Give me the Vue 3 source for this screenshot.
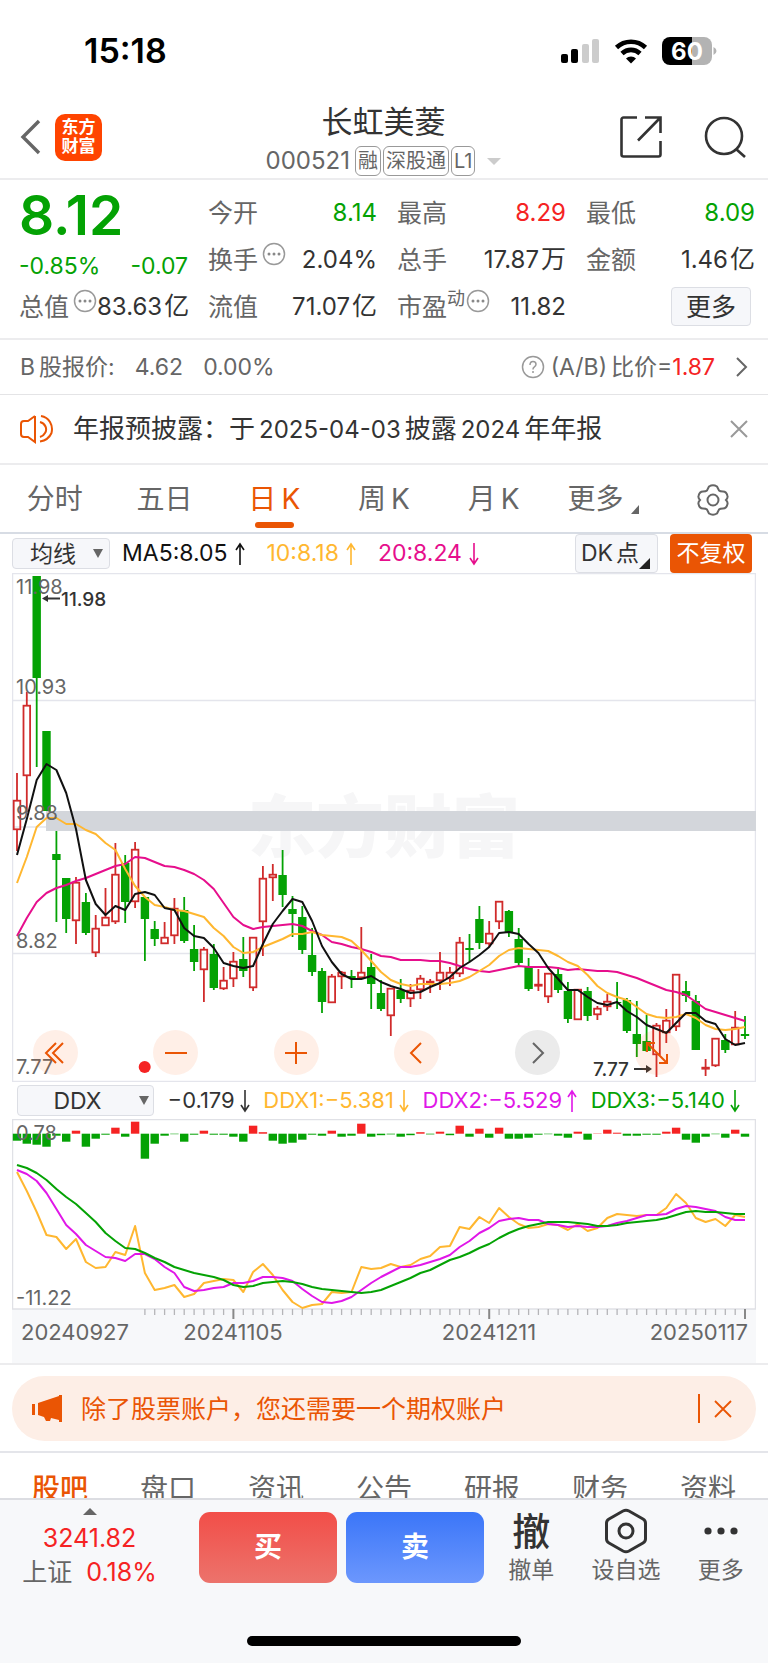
<template>
  <div class="page">
    <div class="status-bar">
      <span class="clock">15:18</span>
      <svg class="status-icons" width="160" height="30" viewBox="0 0 160 30">
        <rect x="1" y="18" width="7" height="9" rx="2" />
        <rect x="11" y="13" width="7" height="14" rx="2" />
        <rect x="22" y="8" width="7" height="19" rx="2" fill="#ccc" />
        <rect x="32" y="3" width="7" height="24" rx="2" fill="#ccc" />
        <g fill="none" stroke="#000" stroke-width="4.6">
          <path d="M56.500 11.500a21 21 0 0 1 29 0" />
          <path d="M62 17.500a13 13 0 0 1 18 0" />
        </g>
        <path d="M66 22.500a7 7 0 0 1 10 0l-5 5z" />
        <path d="M110 1h22v28h-22a8 8 0 0 1-8-8V9a8 8 0 0 1 8-8z" />
        <path d="M132 1h12a8 8 0 0 1 8 8v12a8 8 0 0 1-8 8h-12z" fill="#b3b3b3" />
        <path d="M153.500 11q3 1.500 3 4t-3 4z" fill="#b3b3b3" />
        <text x="127" y="24" class="battery-text" text-anchor="middle">60</text>
      </svg>
    </div>

    <header class="header">
      <div class="header-left">
        <button class="icon-btn" aria-label="返回">
          <svg width="22" height="36" viewBox="0 0 22 36"><path d="M19 2 3 18l16 16" fill="none" stroke="#666" stroke-width="3.400" /></svg>
        </button>
        <div class="logo"><span>东方</span><span>财富</span></div>
      </div>
      <div class="header-title">
        <h1>长虹美菱</h1>
        <div class="header-sub">
          <span class="code">000521</span>
          <span v-for="tag in tags" :key="tag" class="tag">{{ tag }}</span>
          <i class="caret" />
        </div>
      </div>
      <div class="header-right">
        <button class="icon-btn" aria-label="分享">
          <svg width="44" height="44" viewBox="0 0 44 44" fill="none" stroke="#333" stroke-width="2.600">
            <path d="M18 2.500H4.500a2 2 0 0 0-2 2v35a2 2 0 0 0 2 2h35a2 2 0 0 0 2-2V26M26 2.500h15.500V18M41 3 19 25.500" />
          </svg>
        </button>
        <button class="icon-btn" aria-label="搜索">
          <svg width="44" height="44" viewBox="0 0 44 44" fill="none" stroke="#333" stroke-width="2.600">
            <circle cx="21" cy="21" r="18" /><path d="m33 34 9 8" />
          </svg>
        </button>
      </div>
    </header>

    <section class="quote">
      <div class="price">8.12</div>
      <div class="cell"><span>今开</span><b class="green">8.14</b></div>
      <div class="cell"><span>最高</span><b class="red">8.29</b></div>
      <div class="cell"><span>最低</span><b class="green">8.09</b></div>
      <div class="cell change green"><span>-0.85%</span><span>-0.07</span></div>
      <div class="cell"><span>换手<svg class="dots" width="24" height="24" viewBox="0 0 24 24"><use href="#more-dots" /></svg></span><b>2.04%</b></div>
      <div class="cell"><span>总手</span><b>17.87<em>万</em></b></div>
      <div class="cell"><span>金额</span><b>1.46<em>亿</em></b></div>
      <div class="cell"><span>总值<svg class="dots" width="24" height="24" viewBox="0 0 24 24"><use href="#more-dots" /></svg></span><b>83.63<em>亿</em></b></div>
      <div class="cell"><span>流值</span><b>71.07<em>亿</em></b></div>
      <div class="cell"><span>市盈<sup>动</sup><svg class="dots tight" width="24" height="24" viewBox="0 0 24 24"><use href="#more-dots" /></svg></span><b>11.82</b></div>
      <div class="cell more-cell"><button class="soft-btn more-btn">更多</button></div>
      <svg width="0" height="0" class="defs">
        <symbol id="more-dots" viewBox="0 0 24 24">
          <circle cx="12" cy="12" r="10.500" fill="none" stroke="#999" stroke-width="1.500" />
          <g fill="#888"><circle cx="7" cy="12" r="1.500" /><circle cx="12" cy="12" r="1.500" /><circle cx="17" cy="12" r="1.500" /></g>
        </symbol>
      </svg>
    </section>

    <section class="b-share">
      <span>B<em>股报价:</em></span><span>4.62</span><span>0.00%</span>
      <a href="#" class="ratio">
        <svg width="24" height="24" viewBox="0 0 24 24" fill="none" stroke="#999" stroke-width="1.500">
          <circle cx="12" cy="12" r="10.500" />
          <path d="M9 10q0-3.500 3-3.500t3 2.800q0 1.500-1.600 2.600T12 14.500" /><path d="M12 16v2" />
        </svg>
        <span>(A/B)<em>比价</em>=<b class="red">1.87</b></span>
        <svg class="ratio-arrow" width="12" height="20" viewBox="0 0 12 20"><path d="m1 1 9 9-9 9" fill="none" stroke="#666" stroke-width="2" /></svg>
      </a>
    </section>

    <section class="notice">
      <svg width="34" height="30" viewBox="0 0 34 30" fill="none" stroke="#ea5504" stroke-width="2">
        <path d="M15 2v26l-7-5H4q-3 0-3-3V10q0-3 3-3h4l7-5M20 8q4 1 5.500 4.500T25 19q-1.500 3-5 4M21 2q6 1 9 6t1.500 11q-3 7-11.500 8.500" />
      </svg>
      <p>年报预披露：于<i>2025-04-03</i>披露<i>2024</i>年年报</p>
      <button class="icon-btn" aria-label="关闭">
        <svg width="18" height="18" viewBox="0 0 18 18"><path d="m1 1 16 16M17 1 1 17" stroke="#999" stroke-width="2" /></svg>
      </button>
    </section>

    <nav class="period-tabs">
      <button
        v-for="p in periods"
        :key="p"
        :class="{ active: p === activePeriod }"
        @click="activePeriod = p"
      >{{ p }}<i v-if="p === '更多'" class="corner" /></button>
      <button aria-label="设置">
        <svg width="34" height="34" viewBox="0 0 34 34" fill="none" stroke="#666" stroke-width="2">
          <path d="M13 3.500q4-2.500 8 0l2 4q1 1 4 1 3.500 0 4.500 4.500.500 2-1.500 4 2 2 1.500 4-1 4.500-4.500 4.500-3 0-4 1l-2 4q-4 2.500-8 0l-2-4q-1-1-4-1Q3.500 25.500 2.500 21q-.5-2 1.500-4-2-2-1.500-4 1-4.500 4.500-4.500 3 0 4-1z" />
          <circle cx="17" cy="17" r="5.500" />
        </svg>
      </button>
    </nav>

    <div class="ma-bar">
      <label class="picker ma-picker">
        <select v-model="overlay" aria-label="主图指标"><option>均线</option><option>布林</option></select>
      </label>
      <span class="reading ma">MA5:8.05<svg class="arrow" viewBox="0 0 10 24"><path :d="UP" /></svg></span>
      <span class="reading ma orange">10:8.18<svg class="arrow" viewBox="0 0 10 24"><path :d="UP" /></svg></span>
      <span class="reading ma pink">20:8.24<svg class="arrow" viewBox="0 0 10 24"><path :d="DOWN" /></svg></span>
      <button class="soft-btn dk-btn">DK<em>点</em><i class="corner" /></button>
      <button class="adjust-btn">不复权</button>
    </div>

    <div class="chart">
      <svg viewBox="12 573 744 509">
        <text x="384" y="852" class="watermark" text-anchor="middle">东方财富</text>
        <g stroke="#e4e5ec" stroke-width="1.500" fill="none">
          <rect x="12.500" y="573.500" width="743" height="508" />
          <path d="M12 700.500h744M12 827h744M12 953.500h744" />
        </g>
        <rect x="46" y="811" width="710" height="20" fill="#d3d6db" />
        <g v-for="(c, i) in candles" :key="i">
          <template v-if="c[0]">
            <path :d="`M${x(i)} ${c[1]}V${c[2]}M${x(i)} ${c[3]}V${c[4]}`" stroke="#d02b2b" stroke-width="1.800" />
            <rect :x="x(i) - 3.3" :y="c[2] + 0.7" width="6.600" :height="Math.max(c[3] - c[2] - 1.4, 1)" fill="none" stroke="#d02b2b" stroke-width="1.800" />
          </template>
          <template v-else>
            <path :d="`M${x(i)} ${c[1]}V${c[4]}`" stroke="#04a204" stroke-width="1.800" />
            <rect :x="x(i) - 4.2" :y="c[2]" width="8.400" :height="c[3] - c[2]" fill="#04a204" />
          </template>
        </g>
        <g class="lines">
          <polyline :points="line(ma20)" stroke="#e60e8c" />
          <polyline :points="line(ma10)" stroke="#ffb730" />
          <polyline :points="line(ma5)" stroke="#111" />
        </g>
        <g class="axis">
          <text x="16" y="594">11.98</text>
          <text x="16" y="694">10.93</text>
          <text x="16" y="820">9.88</text>
          <text x="16" y="948">8.82</text>
          <text x="16" y="1074">7.77</text>
        </g>
        <circle cx="144.700" cy="1067" r="6" fill="#f52323" />
        <g class="marker">
          <text x="61" y="606">11.98</text>
          <path d="M60 598.500H46" /><path d="m42 598.500 6-3.500v7z" class="head" />
          <text x="593" y="1076">7.77</text>
          <path d="M634 1069h13" /><path d="m652 1069-6-4v8z" class="head" />
        </g>
      </svg>
      <div class="chart-tools">
        <button v-for="t in tools" :key="t.name" class="round-btn" :class="{ gray: t.gray }" :aria-label="t.name">
          <svg width="26" height="26" viewBox="0 0 26 26"><path :d="t.icon" /></svg>
        </button>
      </div>
    </div>

    <div class="ddx-bar">
      <label class="picker ddx-picker">
        <select v-model="indicator" aria-label="副图指标"><option>DDX</option><option>MACD</option></select>
      </label>
      <span class="reading">−0.179<svg class="arrow" viewBox="0 0 10 24"><path :d="DOWN" /></svg></span>
      <span class="reading orange">DDX1:−5.381<svg class="arrow" viewBox="0 0 10 24"><path :d="DOWN" /></svg></span>
      <span class="reading magenta">DDX2:−5.529<svg class="arrow" viewBox="0 0 10 24"><path :d="UP" /></svg></span>
      <span class="reading green">DDX3:−5.140<svg class="arrow" viewBox="0 0 10 24"><path :d="DOWN" /></svg></span>
    </div>

    <div class="chart">
      <svg viewBox="12 1119 744 244">
        <rect x="12" y="1309" width="744" height="54" fill="#f7f8fa" />
        <rect x="12.500" y="1119.500" width="743" height="189.500" fill="none" stroke="#e0e1e6" stroke-width="1.500" />
        <rect
          v-for="(v, i) in ddx"
          :key="i"
          :x="x(i) - 4.2"
          :y="v > 0 ? 1133.7 - v : 1133.7"
          width="8.400"
          :height="Math.abs(v)"
          :fill="v > 0 ? '#f52323' : '#04a204'"
        />
        <g class="axis"><text x="16" y="1140">0.78</text><text x="16" y="1305">-11.22</text></g>
        <g class="lines">
          <polyline :points="line(ddx1)" stroke="#ffb730" />
          <polyline :points="line(ddx2)" stroke="#e017e8" />
          <polyline :points="line(ddx3)" stroke="#04a204" />
        </g>
        <path
          v-for="i in ticks"
          :key="i"
          :d="`M${x(i)} 1309v${isMajor(i) ? 10 : 6}`"
          :stroke="isMajor(i) ? '#888' : '#b5b5b8'"
          :stroke-width="isMajor(i) ? 2 : 1.3"
        />
        <g class="dates">
          <text x="21" y="1340">20240927</text>
          <text x="233" y="1340" text-anchor="middle">20241105</text>
          <text x="489" y="1340" text-anchor="middle">20241211</text>
          <text x="748" y="1340" text-anchor="end">20250117</text>
        </g>
      </svg>
    </div>

    <div class="banner-wrap">
      <div class="banner">
        <svg width="32" height="28" viewBox="0 0 32 28" fill="#ea5504">
          <path d="M0 9h3v11H0zM6 8 27 1V0h3v27h-3v-2l-8-2-1 3h-4l-2-4-6-2z" />
        </svg>
        <p>除了股票账户，您还需要一个期权账户</p>
        <span class="banner-divider" />
        <button class="icon-btn" aria-label="关闭">
          <svg width="18" height="18" viewBox="0 0 18 18"><path d="m1 1 16 16M17 1 1 17" stroke="#ea5504" stroke-width="1.800" /></svg>
        </button>
      </div>
    </div>

    <nav class="info-tabs">
      <button v-for="t in infoTabs" :key="t" :class="{ active: t === activeInfo }" @click="activeInfo = t">{{ t }}</button>
    </nav>

    <footer class="bottom">
      <div class="bottom-bar">
        <div class="index">
          <i class="up-caret" />
          <span class="red">3241.82</span>
          <span class="index-row">上证<b class="red">0.18%</b></span>
        </div>
        <div class="trade">
          <button class="buy">买</button>
          <button class="sell">卖</button>
        </div>
        <div class="actions">
          <button><span class="action-icon">撤</span>撤单</button>
          <button>
            <span class="action-icon">
              <svg width="44" height="46" viewBox="0 0 44 46" fill="none" stroke="#333" stroke-width="3">
                <path d="M19 3q3-1.500 6 0l14 8q2.500 1.500 2.500 4v16q0 2.500-2.500 4l-14 8q-3 1.500-6 0L5 35q-2.500-1.500-2.500-4V15q0-2.500 2.500-4z" />
                <circle cx="22" cy="23" r="7" />
              </svg>
            </span>设自选
          </button>
          <button>
            <span class="action-icon">
              <svg width="34" height="8" viewBox="0 0 34 8" fill="#333"><circle cx="4" cy="4" r="3.600" /><circle cx="17" cy="4" r="3.600" /><circle cx="30" cy="4" r="3.600" /></svg>
            </span>更多
          </button>
        </div>
      </div>
      <div class="home-indicator" />
    </footer>
  </div>
</template>

<script setup>
import { ref } from 'vue'

const tags = ['融', '深股通', 'L1']
const periods = ['分时', '五日', '日\u2009K', '周\u2009K', '月\u2009K', '更多']
const activePeriod = ref(periods[2])
const overlay = ref('均线')
const indicator = ref('DDX')
const infoTabs = ['股吧', '盘口', '资讯', '公告', '研报', '财务', '资料']
const activeInfo = ref('股吧')

const UP = 'M5 23V2M1 8l4-6 4 6'
const DOWN = 'M5 1v21M1 16l4 6 4-6'

const tools = [
  { name: '最左', icon: 'M13 3 3 13l10 10M20 3 10 13l10 10' },
  { name: '缩小', icon: 'M2 13h22' },
  { name: '放大', icon: 'M2 13h22M13 2v22' },
  { name: '左移', icon: 'M17 3 7 13l10 10' },
  { name: '右移', icon: 'M9 3l10 10L9 23', gray: true },
  { name: '全屏', icon: 'M11 3H3v9M3 3l20 20M15 23h8v-9' }
]

const STEP = 728 / 74
const x = i => +(17 + i * STEP).toFixed(1)
const line = ys => ys.map((y, i) => `${x(i)},${y}`).join(' ')

// [rising, high, body top, body bottom, low]
const candles = [
  [1, 773, 800, 830, 851], [1, 692, 705, 776, 812], [0, 576, 576, 678, 767], [0, 731, 731, 811, 811], [0, 831, 854, 860, 922],
  [0, 878, 878, 919, 933], [1, 877, 882, 921, 944], [0, 893, 902, 933, 935], [1, 915, 928, 953, 957], [1, 888, 917, 926, 926],
  [1, 843, 874, 922, 924], [0, 855, 863, 902, 923], [1, 842, 849, 902, 908], [0, 897, 897, 919, 961], [0, 921, 929, 939, 946],
  [1, 922, 937, 944, 944], [1, 898, 908, 936, 944], [0, 897, 910, 941, 943], [0, 925, 949, 962, 971], [1, 947, 949, 970, 1002],
  [0, 944, 954, 988, 990], [1, 967, 980, 989, 990], [1, 952, 961, 979, 987], [0, 937, 959, 971, 977], [1, 937, 937, 988, 991],
  [1, 866, 878, 922, 956], [1, 864, 874, 878, 901], [0, 850, 875, 895, 907], [0, 896, 909, 914, 937], [0, 906, 917, 950, 954],
  [0, 928, 955, 972, 976], [0, 968, 971, 1002, 1013], [1, 974, 976, 1003, 1003], [1, 971, 972, 977, 989], [0, 970, 976, 978, 988],
  [1, 927, 972, 978, 979], [0, 954, 967, 984, 1009], [0, 980, 993, 1009, 1011], [1, 988, 988, 1016, 1036], [0, 979, 990, 999, 1003],
  [1, 984, 990, 999, 1007], [1, 975, 978, 990, 999], [1, 979, 981, 983, 993], [1, 952, 972, 981, 990], [1, 967, 972, 979, 986],
  [1, 937, 942, 974, 977], [0, 934, 948, 950, 962], [0, 906, 919, 943, 949], [1, 921, 933, 944, 947], [1, 901, 901, 922, 929],
  [0, 910, 911, 933, 937], [0, 928, 939, 963, 967], [0, 958, 967, 989, 991], [1, 969, 984, 985, 991], [1, 973, 973, 997, 1003],
  [0, 967, 974, 990, 993], [0, 982, 991, 1019, 1023], [1, 989, 989, 1020, 1020], [0, 987, 991, 1016, 1021], [1, 1006, 1008, 1015, 1020],
  [1, 994, 1001, 1007, 1011], [0, 982, 1002, 1003, 1009], [0, 998, 1000, 1031, 1033], [0, 1001, 1034, 1044, 1057], [0, 1015, 1041, 1051, 1052],
  [1, 1023, 1025, 1055, 1077], [1, 1009, 1020, 1033, 1043], [1, 974, 974, 1027, 1031], [0, 981, 991, 996, 1002], [0, 995, 1001, 1050, 1050],
  [1, 1059, 1067, 1069, 1076], [1, 1038, 1038, 1066, 1067], [0, 1034, 1040, 1050, 1053], [1, 1011, 1027, 1045, 1045], [0, 1016, 1034, 1036, 1039]
]

const ma5 = [
  855, 819, 780, 764, 770, 793, 829, 880, 904, 915, 906, 910, 894, 892, 895, 908, 910, 928, 936, 938, 948, 963, 966, 968, 966,
  944, 924, 911, 899, 902, 921, 946, 962, 974, 979, 979, 976, 982, 986, 989, 993, 992, 987, 983, 977, 968, 962, 955, 947, 933,
  932, 934, 944, 953, 968, 979, 990, 990, 997, 1003, 1005, 1002, 1011, 1017, 1025, 1029, 1033, 1023, 1013, 1013, 1021, 1024, 1039, 1045, 1043
]
const ma10 = [
  883, 857, 827, 818, 818, 824, 824, 830, 834, 843, 850, 869, 886, 897, 905, 907, 910, 911, 914, 917, 928, 936, 947, 953, 952,
  947, 943, 939, 934, 934, 932, 935, 936, 937, 941, 950, 961, 972, 980, 984, 986, 984, 984, 984, 983, 981, 977, 971, 965, 956,
  950, 948, 949, 950, 951, 956, 962, 966, 975, 986, 993, 997, 1000, 1007, 1014, 1017, 1018, 1017, 1014, 1018, 1025, 1029, 1030, 1029, 1027
]
const ma20 = [
  936, 918, 902, 893, 888, 885, 881, 878, 874, 870, 866, 864, 857, 858, 862, 866, 867, 870, 874, 880, 889, 903, 917, 925, 929,
  927, 926, 925, 924, 926, 931, 935, 942, 944, 947, 949, 952, 956, 957, 960, 960, 960, 961, 961, 963, 966, 969, 971, 972, 970,
  968, 966, 967, 967, 967, 968, 970, 969, 970, 971, 971, 972, 975, 978, 982, 986, 990, 992, 995, 1002, 1009, 1012, 1015, 1018, 1021
]

const ddx = [
  -7, -10, -11, -13, -2, -8, 3, -13, -5, -1, 6, -3, 12, -25, -10, -2, -0.5, -8, -1, 3, -1, -1, -3, -8, 8,
  1.5, -7, -10, -9, -6, -1, -2, 3, -3, -2, 10, -3, -1.5, -0.7, -3, -1.5, 1.5, -0.7, 2, -1.5, 8, -3, 5, -4, 6,
  -5, -5, -4, -1, -0.5, -2, -4, 2, -6, 0.3, 4, 1, -2, -2, -1, -1, 2, 6, -6, -9, -3, -0.5, -4, 4, -3
]
const ddx1 = [
  1172, 1191, 1212, 1235, 1237, 1249, 1239, 1262, 1268, 1267, 1252, 1255, 1226, 1273, 1290, 1288, 1285, 1297, 1294, 1283, 1281, 1279, 1280, 1292, 1272,
  1264, 1275, 1290, 1302, 1308, 1305, 1304, 1292, 1293, 1292, 1267, 1269, 1268, 1264, 1267, 1265, 1259, 1256, 1247, 1246, 1227, 1229, 1217, 1223, 1208,
  1217, 1224, 1228, 1227, 1224, 1225, 1230, 1224, 1231, 1228, 1218, 1214, 1215, 1216, 1215, 1215, 1208, 1194, 1203, 1218, 1222, 1219, 1226, 1215, 1217
]
const ddx2 = [
  1170, 1174, 1181, 1193, 1209, 1225, 1234, 1245, 1251, 1257, 1258, 1261, 1254, 1254, 1259, 1267, 1273, 1287, 1291, 1290, 1288, 1287, 1283, 1283, 1281,
  1277, 1277, 1278, 1281, 1289, 1296, 1302, 1303, 1301, 1297, 1290, 1283, 1277, 1272, 1267, 1267, 1265, 1262, 1259, 1255, 1247, 1241, 1233, 1228, 1221,
  1219, 1218, 1220, 1220, 1224, 1225, 1227, 1226, 1227, 1227, 1226, 1223, 1221, 1218, 1215, 1215, 1214, 1209, 1206, 1207, 1209, 1211, 1217, 1220, 1220
]
const ddx3 = [
  1165, 1168, 1173, 1180, 1189, 1197, 1204, 1213, 1222, 1233, 1241, 1248, 1249, 1253, 1258, 1262, 1267, 1270, 1273, 1275, 1277, 1280, 1285, 1287, 1286,
  1283, 1282, 1281, 1282, 1284, 1287, 1289, 1290, 1291, 1292, 1293, 1292, 1290, 1286, 1282, 1278, 1273, 1270, 1265, 1260, 1257, 1253, 1248, 1244, 1238,
  1233, 1229, 1226, 1224, 1222, 1222, 1222, 1223, 1224, 1226, 1226, 1225, 1223, 1222, 1221, 1220, 1218, 1215, 1212, 1211, 1212, 1212, 1213, 1214, 1214
]

const ticks = Array.from({ length: 62 }, (_, i) => i + 13)
const isMajor = i => [22, 48, 74].includes(i)
</script>

<style>
body { background: #fff; }
</style>

<style scoped>
.page { font-family: Inter, "Noto Sans CJK SC", sans-serif; line-height: 1.25; color: #333; background: #fff; overflow: hidden; }
.page * { box-sizing: border-box; }
button, select { font-family: inherit; line-height: inherit; color: inherit; margin: 0; padding: 0; border: none; background: none; cursor: pointer; }
b { font-weight: 400; }
em, i { font-style: normal; }
svg { flex: none; }
.red { color: #f52323; }
.green { color: #04a204; }
.orange { color: #ffb730; }
.pink { color: #e60e8c; }
.magenta { color: #e017e8; }
.icon-btn { display: flex; }

.status-bar { height: 96px; padding: 6px 48px 0 84px; display: flex; align-items: center; justify-content: space-between; }
.clock { font-size: 34px; font-weight: 600; color: #000; }
.battery-text { font-size: 24px; font-weight: 700; fill: #fff; }

.header { height: 84px; padding: 0 21px 2px 20px; display: grid; grid-template-columns: 1fr auto 1fr; align-items: center; border-bottom: 2px solid #ececee; }
.header-left { display: flex; align-items: center; gap: 13px; }
.logo { width: 47px; height: 47px; border-radius: 10px; background: #ff4400; color: #fff; display: flex; flex-direction: column; align-items: center; justify-content: center; font-size: 17px; font-weight: 700; line-height: 19px; }
.header-title { text-align: center; padding-top: 4px; }
.header-title h1 { margin: 0; font-size: 31px; font-weight: 400; line-height: 44px; }
.header-sub { display: flex; align-items: center; justify-content: center; gap: 2px; height: 34px; color: #666; }
.code { font-size: 24px; margin-right: 3px; }
.tag { height: 30px; line-height: 28px; padding: 0 2px; border: 1px solid #999; border-radius: 6px; font-size: 20px; }
.caret { margin-left: 10px; border: 7px solid transparent; border-top-color: #ccc; border-bottom: none; }
.header-right { display: flex; justify-content: flex-end; gap: 40px; }

.quote { position: relative; display: grid; grid-template-columns: repeat(4, minmax(0, 1fr)); grid-auto-rows: 47px; column-gap: 20px; padding: 9px 13px 8px 19px; border-bottom: 2px solid #ececee; }
.defs { position: absolute; }
.price { font-size: 55px; font-weight: 600; line-height: 52px; color: #04a204; }
.cell { display: flex; justify-content: space-between; align-items: center; font-size: 25px; line-height: 36px; white-space: nowrap; color: #666; }
.cell > span { display: flex; }
.cell b { color: #333; font-size: 24px; }
.cell b em { margin-left: 2px; font-size: 25px; }
.cell b.red { color: #f52323; }
.cell b.green { color: #04a204; }
.cell.change { color: #04a204; font-size: 23px; padding-top: 12px; }
.cell sup { font-size: 18px; line-height: 20px; vertical-align: baseline; }
.dots { margin-left: 4px; }
.dots.tight { margin-left: 1px; }
.soft-btn { border: 1px solid #dcdee4; border-radius: 4px; background: #f6f7fa; color: #333; }
.more-cell { justify-content: flex-end; padding-right: 4px; }
.more-btn { width: 80px; height: 39px; font-size: 25px; }

.b-share { height: 55px; padding: 0 20px; display: flex; align-items: center; gap: 20px; font-size: 23px; color: #666; border-bottom: 1px solid #e4e4e6; white-space: nowrap; }
.b-share em { margin-left: 4px; }
.ratio { margin-left: auto; display: flex; align-items: center; gap: 6px; color: inherit; text-decoration: none; }
.ratio-arrow { margin-left: 15px; }

.notice { height: 70px; padding: 0 20px; display: flex; align-items: center; font-size: 26px; border-bottom: 2px solid #ececee; }
.notice p { flex: 1; margin: 0 0 0 19px; }
.notice p i { margin: 0 4px; font-size: 24px; }

.period-tabs { height: 69px; display: grid; grid-template-columns: repeat(7, 1fr); border-bottom: 2px solid #d7dce4; }
.period-tabs button { position: relative; display: flex; align-items: center; justify-content: center; padding-top: 2px; font-size: 28px; color: #666; }
.period-tabs .active { color: #ea5504; }
.period-tabs .active::after { content: ""; position: absolute; bottom: 4px; width: 39px; height: 6px; border-radius: 3px; background: #ea5504; }
.corner { align-self: flex-end; border-left: 8px solid transparent; border-bottom: 9px solid #666; }
.period-tabs .corner { margin: 0 0 18px 8px; }

.ma-bar { height: 39px; padding: 0 16px 0 12px; display: flex; align-items: center; color: #111; }
.picker { position: relative; display: block; }
.picker select { display: block; width: 100%; height: 31px; appearance: none; border: 1px solid #dcdee4; border-radius: 4px; background: #f6f7fa; color: #333; font-size: 23px; line-height: 28px; text-align-last: center; padding-right: 16px; }
.picker::after { content: ""; position: absolute; right: 7px; top: 11px; border: 5px solid transparent; border-top: 9px solid #666; border-bottom: none; pointer-events: none; }
.ma-picker { width: 98px; margin-right: 12px; }
.reading { display: flex; align-items: center; gap: 5px; white-space: nowrap; font-size: 22px; }
.reading.ma { font-size: 23px; margin-right: 22px; gap: 7px; }
.arrow { width: 10px; height: 24px; fill: none; stroke: currentColor; stroke-width: 1.6; }
.dk-btn { display: flex; align-items: center; height: 39px; width: 83px; padding-left: 5px; margin-left: auto; font-size: 23px; }
.dk-btn em { margin-left: 3px; }
.dk-btn .corner { border-left-width: 11px; border-bottom: 11px solid #222; margin-bottom: 3px; }
.adjust-btn { margin-left: 12px; width: 82px; height: 39px; border-radius: 4px; background: #ea5504; color: #fff; font-size: 23px; }

.chart { position: relative; margin: 0 12px; }
.chart > svg { display: block; width: 100%; }
.watermark { font-size: 68px; font-weight: 900; fill: #f6f6f7; }
.axis { font-size: 20px; fill: #666; }
.dates { font-size: 22px; fill: #666; }
.lines { fill: none; stroke-width: 2; stroke-linejoin: round; }
.marker { font-size: 19px; font-weight: 500; fill: #333; }
.marker path { stroke: #333; stroke-width: 2; }
.marker .head { stroke: none; }
.chart-tools { position: absolute; left: 21px; right: 76px; bottom: 7px; display: flex; justify-content: space-between; }
.round-btn { width: 45px; height: 45px; border-radius: 50%; background: rgba(255, 100, 20, 0.1); display: flex; align-items: center; justify-content: center; }
.round-btn path { fill: none; stroke: #ea5504; stroke-width: 2; }
.round-btn.gray { background: #ebebeb; }
.round-btn.gray path { stroke: #666; }

.ddx-bar { height: 37px; padding: 0 28px 0 17px; display: flex; align-items: center; justify-content: space-between; }
.ddx-picker { width: 137px; }
.ddx-picker::after { right: 5px; }

.banner-wrap { padding: 11px 12px 10px; border-top: 2px solid #ececee; border-bottom: 2px solid #e4e5ea; }
.banner { height: 65px; border-radius: 33px; padding: 0 24px 0 20px; background: #fdeee6; color: #ea5504; display: flex; align-items: center; }
.banner p { flex: 1; margin: 0 0 0 17px; padding-top: 3px; font-size: 25px; }
.banner-divider { width: 2px; height: 29px; background: #ea5504; margin-right: 14px; }

.info-tabs { padding: 16px 6px 4px; display: grid; grid-template-columns: repeat(7, 1fr); }
.info-tabs button { font-size: 28px; line-height: 40px; color: #666; }
.info-tabs .active { color: #ea5504; font-weight: 500; }

/* the trade bar covers the lower edge of the tab row */
.bottom { position: relative; margin-top: -15px; background: #f7f8fa; border-top: 2px solid #dcdde2; padding-bottom: 17px; }
.bottom-bar { display: grid; grid-template-columns: 199fr 285fr 284fr; height: 136px; padding-top: 12px; align-items: start; }
.index { display: flex; flex-direction: column; align-items: center; padding-right: 20px; font-size: 25px; line-height: 34px; color: #666; margin-top: -4px; }
.index-row { display: flex; gap: 14px; }
.up-caret { margin-bottom: 6px; border: 7px solid transparent; border-bottom-color: #666; border-top: none; }
.trade { display: flex; gap: 9px; }
.trade button { flex: 1; height: 71px; border-radius: 11px; color: #fff; font-size: 28px; font-weight: 700; }
.buy { background: linear-gradient(#f24e48, #ec736c); }
.sell { background: linear-gradient(#3b76f8, #6c97fd); }
.actions { display: grid; grid-template-columns: repeat(3, 1fr); }
.actions button { display: flex; flex-direction: column; align-items: center; font-size: 23px; line-height: 32px; color: #666; }
.action-icon { height: 46px; display: flex; align-items: center; color: #333; font-size: 38px; font-weight: 500; margin-top: -4px; }
.home-indicator { width: 274px; height: 10px; margin: 0 auto; border-radius: 5px; background: #000; }
</style>
